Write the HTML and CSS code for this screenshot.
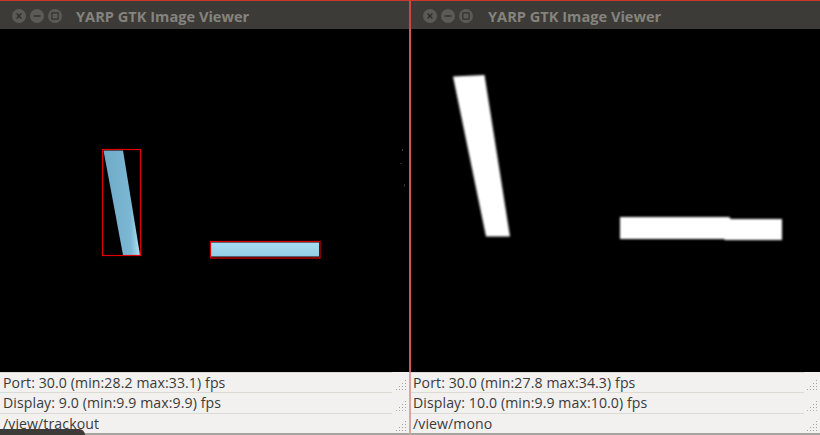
FILE: index.html
```html
<!DOCTYPE html>
<html>
<head>
<meta charset="utf-8">
<link rel="stylesheet" href="styles.css">
</head>
<body>
<div class="desktop">
  <div class="window left">
    <div class="titlebar">
      <div class="buttons">
        <span class="btn"><svg width="14" height="14" viewBox="0 0 14 14"><path d="M4.6 4.6 L9.4 9.4 M9.4 4.6 L4.6 9.4" stroke="#2f2e2a" stroke-width="1.4"/></svg></span>
        <span class="btn"><svg width="14" height="14" viewBox="0 0 14 14"><path d="M3.5 7 H10.5" stroke="#2f2e2a" stroke-width="1.3"/></svg></span>
        <span class="btn"><svg width="14" height="14" viewBox="0 0 14 14"><rect x="3.9" y="3.9" width="6.2" height="6.2" fill="none" stroke="#2f2e2a" stroke-width="1.1"/></svg></span>
      </div>
      <span class="title">YARP GTK Image Viewer</span>
    </div>
    <div class="image">
      <svg class="canvas" width="409" height="343" viewBox="0 0 409 343">
        <defs>
          <linearGradient id="b1" x1="0" y1="0" x2="1" y2="0">
            <stop offset="0" stop-color="#6fa9c6"/>
            <stop offset="0.75" stop-color="#7cb8d5"/>
            <stop offset="1" stop-color="#b2e3f4"/>
          </linearGradient>
          <linearGradient id="b2" x1="0" y1="0" x2="0" y2="1">
            <stop offset="0" stop-color="#a8def3"/>
            <stop offset="1" stop-color="#94cde6"/>
          </linearGradient>
        </defs>
        <polygon points="103.5,121.5 123,121.5 140,226 123,226" fill="url(#b1)"/>
        <rect x="102.5" y="120.5" width="38" height="106" fill="none" stroke="#e00000" stroke-width="1.2"/>
        <rect x="211" y="213.5" width="108" height="14" fill="url(#b2)"/>
        <rect x="210.5" y="212.5" width="109.5" height="16.5" fill="none" stroke="#e00000" stroke-width="1.2"/>
        <rect x="402" y="120" width="1" height="2" fill="#3a3a3a"/>
        <rect x="400" y="134" width="2" height="1" fill="#2a2a2a"/>
        <rect x="404" y="155" width="1" height="3" fill="#2e2e2e"/>
      </svg>
    </div>
    <div class="status">
      <div class="row"><span class="cell">Port: 30.0 (min:28.2 max:33.1) fps</span><span class="grip"></span></div>
      <div class="row"><span class="cell">Display: 9.0 (min:9.9 max:9.9) fps</span><span class="grip"></span></div>
      <div class="row"><span class="cell">/view/trackout</span><span class="grip"></span></div>
    </div>
    <div class="dock-tab"></div>
  </div>
  <div class="window right">
    <div class="titlebar">
      <div class="buttons">
        <span class="btn"><svg width="14" height="14" viewBox="0 0 14 14"><path d="M4.6 4.6 L9.4 9.4 M9.4 4.6 L4.6 9.4" stroke="#2f2e2a" stroke-width="1.4"/></svg></span>
        <span class="btn"><svg width="14" height="14" viewBox="0 0 14 14"><path d="M3.5 7 H10.5" stroke="#2f2e2a" stroke-width="1.3"/></svg></span>
        <span class="btn"><svg width="14" height="14" viewBox="0 0 14 14"><rect x="3.9" y="3.9" width="6.2" height="6.2" fill="none" stroke="#2f2e2a" stroke-width="1.1"/></svg></span>
      </div>
      <span class="title">YARP GTK Image Viewer</span>
    </div>
    <div class="image">
      <svg class="canvas" width="409" height="343" viewBox="0 0 409 343">
        <defs>
          <filter id="soft" x="-10%" y="-10%" width="120%" height="120%">
            <feGaussianBlur stdDeviation="0.9"/>
          </filter>
        </defs>
        <g filter="url(#soft)" fill="#ffffff">
          <polygon points="42,47.5 73.5,46 99,207.5 75,207.5"/>
          <polygon points="209,188 318,188 320,190 371,190 371,211 314,211 313,210 209,210"/>
        </g>
      </svg>
    </div>
    <div class="status">
      <div class="row"><span class="cell">Port: 30.0 (min:27.8 max:34.3) fps</span><span class="grip"></span></div>
      <div class="row"><span class="cell">Display: 10.0 (min:9.9 max:10.0) fps</span><span class="grip"></span></div>
      <div class="row"><span class="cell">/view/mono</span><span class="grip"></span></div>
    </div>
  </div>
</div>
</body>
</html>
```

FILE: styles.css
```css
* { box-sizing: border-box; }
html, body {
  margin: 0;
  padding: 0;
  background: #3c3b37;
}
.desktop {
  width: 820px;
  height: 435px;
  display: flex;
  overflow: hidden;
  background: #3c3b37;
}
.window {
  position: relative;
  display: flex;
  flex-direction: column;
  height: 435px;
}
.window.left {
  width: 409px;
}
.window.right {
  width: 411px;
}
.titlebar {
  height: 29px;
  flex: none;
  display: flex;
  align-items: center;
  background: #3c3b37;
  border-top: 1px solid #c9382a;
}
.right .titlebar {
  border-left: 2px solid #c94a3e;
}
.buttons {
  display: flex;
  gap: 4px;
  margin-left: 12px;
  margin-top: 2px;
}
.btn {
  width: 14px;
  height: 14px;
  border-radius: 50%;
  background: #5b5a55;
  display: flex;
}
.title {
  margin-left: 14px;
  margin-top: 1px;
  font-family: "Open Sans", "DejaVu Sans", sans-serif;
  font-weight: 700;
  font-size: 14.6px;
  color: #85837e;
}
.right .title {
  margin-left: 15px;
}
.image {
  height: 343px;
  flex: none;
  background: #000;
}
.right .image {
  border-left: 2px solid #c95a50;
}
.canvas {
  display: block;
}
.status {
  flex: none;
  height: 63px;
  background: #f2f1f0;
  border-bottom: 2px solid #a5a4a1;
  display: flex;
  flex-direction: column;
  font-family: "Open Sans", "DejaVu Sans", sans-serif;
  font-size: 14.1px;
  color: #3a3a3a;
}
.right .status {
  border-left: 2px solid #dba6a2;
}
.row {
  flex: 1;
  display: flex;
}
.cell {
  flex: 1;
  padding-left: 3px;
  line-height: 19px;
  border-top: 1px solid #dcdad5;
  white-space: nowrap;
  letter-spacing: 0.1px;
}
.right .cell {
  padding-left: 2px;
}
.left .cell { margin-right: 17px; }
.right .cell { margin-right: 16px; }
.grip {
  position: relative;
  width: 0;
}
.grip::after {
  content: "";
  position: absolute;
  right: 3px;
  bottom: 2px;
  width: 11px;
  height: 11px;
  background:
    radial-gradient(circle, #a3a19c 0.8px, transparent 1px) 0 0 / 3px 3px;
  clip-path: polygon(100% 0, 100% 100%, 0 100%);
}
.dock-tab {
  position: absolute;
  z-index: 2;
  left: 0;
  bottom: 0;
  width: 85px;
  height: 6px;
  background: #3c3b37;
  border-top-right-radius: 6px;
}
```
